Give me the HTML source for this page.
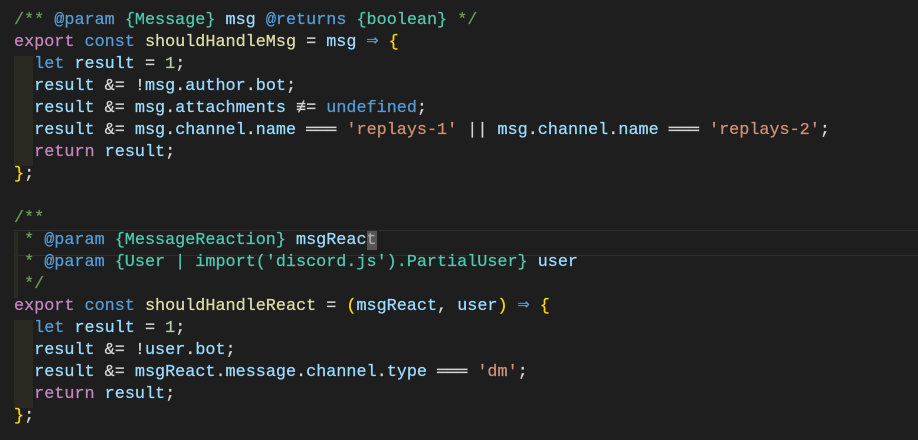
<!DOCTYPE html><html><head><style>
body{margin:0;background:#1e1e1e;width:918px;height:440px;overflow:hidden;position:relative}
.c{position:absolute;left:14px;top:10px;font-family:"Liberation Mono",monospace;font-size:16.8px;line-height:22px;color:#d4d4d4;white-space:pre;-webkit-text-stroke:0.25px}
.g{position:absolute;left:14px;width:19px;background:#2a2a22}
.cur{position:absolute;left:14px;right:0;top:230px;height:24px;border-top:1px solid #2e2e2e;border-bottom:1px solid #2e2e2e}
.cm{color:#6a9955}.k{color:#c586c0}.b{color:#569cd6}.f{color:#dcdcaa}.v{color:#9cdcfe}.y{color:#ffd700}.s{color:#ce9178}.n{color:#b5cea8}.t{color:#4ec9b0}.sel{background:#555;color:#aaa}
.a{font-size:20px;line-height:0}
</style></head><body>
<div class="g" style="top:56px;height:110px"></div>
<div class="g" style="top:232px;height:66px;width:4px"></div>
<div class="g" style="top:320px;height:88px"></div>
<div class="cur"></div>
<div class="c"><span class="cm">/** <span class="b">@param</span> <span class="t">{Message}</span> <span class="v">msg</span> <span class="b">@returns</span> <span class="t">{boolean}</span> */</span>
<span class="k">export</span> <span class="b">const</span> <span class="f">shouldHandleMsg</span> = <span class="v">msg</span> <span class="b a">⇒</span> <span class="y">{</span>
  <span class="b">let</span> <span class="v">result</span> = <span class="n">1</span>;
  <span class="v">result</span> &amp;= !<span class="v">msg</span>.<span class="v">author</span>.<span class="v">bot</span>;
  <span class="v">result</span> &amp;= <span class="v">msg</span>.<span class="v">attachments</span> ≢= <span class="b">undefined</span>;
  <span class="v">result</span> &amp;= <span class="v">msg</span>.<span class="v">channel</span>.<span class="v">name</span> ═══ <span class="s">'replays-1'</span> || <span class="v">msg</span>.<span class="v">channel</span>.<span class="v">name</span> ═══ <span class="s">'replays-2'</span>;
  <span class="k">return</span> <span class="v">result</span>;
<span class="y">}</span>;

<span class="cm">/**
 * <span class="b">@param</span> <span class="t">{MessageReaction}</span> <span class="v">msgReac<span class="sel">t</span></span>
 * <span class="b">@param</span> <span class="t">{User | import('discord.js').PartialUser}</span> <span class="v">user</span>
 */</span>
<span class="k">export</span> <span class="b">const</span> <span class="f">shouldHandleReact</span> = <span class="y">(</span><span class="v">msgReact</span>, <span class="v">user</span><span class="y">)</span> <span class="b a">⇒</span> <span class="y">{</span>
  <span class="b">let</span> <span class="v">result</span> = <span class="n">1</span>;
  <span class="v">result</span> &amp;= !<span class="v">user</span>.<span class="v">bot</span>;
  <span class="v">result</span> &amp;= <span class="v">msgReact</span>.<span class="v">message</span>.<span class="v">channel</span>.<span class="v">type</span> ═══ <span class="s">'dm'</span>;
  <span class="k">return</span> <span class="v">result</span>;
<span class="y">}</span>;</div>
</body></html>
